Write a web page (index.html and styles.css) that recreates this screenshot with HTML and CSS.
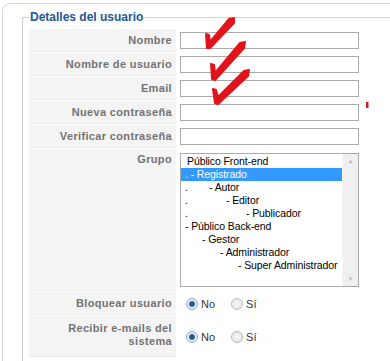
FILE: index.html
```html
<!DOCTYPE html>
<html lang="es">
<head>
    <meta charset="UTF-8">
    <title>Detalles del usuario</title>
    <link rel="stylesheet" href="styles.css">
</head>
<body>
<div class="page">
    <div class="panel">
        <fieldset class="details">
            <legend>Detalles del usuario</legend>
            <div class="form-grid">
                <label class="key" for="name">Nombre</label>
                <div class="val"><input type="text" id="name"></div>

                <label class="key" for="username">Nombre de usuario</label>
                <div class="val"><input type="text" id="username"></div>

                <label class="key" for="email">Email</label>
                <div class="val"><input type="text" id="email"></div>

                <label class="key" for="password">Nueva contraseña</label>
                <div class="val"><input type="password" id="password"></div>

                <label class="key" for="password2">Verificar contraseña</label>
                <div class="val"><input type="password" id="password2"></div>

                <label class="key key-top">Grupo</label>
                <div class="val">
                    <div class="listbox">
                        <ul class="options">
                            <li class="opt first">Público Front-end</li>
                            <li class="opt selected">. - Registrado</li>
                            <li class="opt"><span class="dot dot-24">.</span>- Autor</li>
                            <li class="opt"><span class="dot dot-41">.</span>- Editor</li>
                            <li class="opt"><span class="dot dot-61">.</span>- Publicador</li>
                            <li class="opt">- Público Back-end</li>
                            <li class="opt lvl-1">- Gestor</li>
                            <li class="opt lvl-2">- Administrador</li>
                            <li class="opt lvl-3">- Super Administrador</li>
                        </ul>
                        <div class="scrollbar">
                            <span class="arrow">&#9650;</span>
                            <span class="arrow">&#9660;</span>
                        </div>
                    </div>
                </div>

                <div class="key">Bloquear usuario</div>
                <div class="val radios">
                    <input type="radio" name="block" id="block0" checked><label for="block0">No</label>
                    <input type="radio" name="block" id="block1"><label for="block1">Sí</label>
                </div>

                <div class="key key-tall">Recibir e-mails del sistema</div>
                <div class="val radios">
                    <input type="radio" name="mail" id="mail0" checked><label for="mail0">No</label>
                    <input type="radio" name="mail" id="mail1"><label for="mail1">Sí</label>
                </div>
            </div>
        </fieldset>
    </div>

    <!-- hand drawn marks on top of the screenshot -->
    <svg class="marks" width="390" height="361" viewBox="0 0 390 361">
        <g fill="#e3131b" stroke="#e3131b" stroke-width="2" stroke-linejoin="round">
            <path d="M206 34 L209 35 L210 42 L229 19 L234 18 L234 23 L210 48 L207 48 Z"/>
            <path d="M211 64 L214 65 L215 73 L240 43 L245 42 L244 48 L215 80 L212 79 Z"/>
            <path d="M213 89 L216 90 L218 97 L244 71 L249 70 L248 76 L218 104 L215 103 Z"/>
        </g>
        <rect x="366" y="102" width="2.5" height="6" fill="#d8141c"/>
    </svg>
</div>
</body>
</html>
```

FILE: styles.css
```css
body {
    margin: 0;
    font-family: "Liberation Sans", Arial, sans-serif;
    background: #fff;
    overflow: hidden;
}

.page {
    position: relative;
    width: 390px;
    height: 361px;
    overflow: hidden;
}

.panel {
    margin: 3px 0 0 2px;
    width: 430px;
    height: 380px;
    border: 1px solid #d6d6d6;
    border-radius: 8px;
    padding: 6px 0 0 19px;
    box-sizing: border-box;
}

.details {
    margin: 0;
    border: 1px solid #cfcfcf;
    padding: 5px 6px 9px 6px;
}

.details legend {
    padding: 0 1px;
    color: #1d5796;
    font-size: 12px;
    font-weight: bold;
    line-height: 14px;
}

.form-grid {
    display: grid;
    grid-template-columns: 147px 1fr;
    row-gap: 1px;
}

.key {
    background: #f4f4f4;
    border-bottom: 1px solid #e9e9e9;
    color: #737373;
    font-size: 11px;
    font-weight: bold;
    letter-spacing: 0.35px;
    text-align: right;
    padding: 0 4px;
    min-height: 22px;
    display: flex;
    align-items: center;
    justify-content: flex-end;
    line-height: 13px;
}

.key-top {
    align-items: flex-start;
    padding-top: 4px;
}

.key-tall {
    padding-top: 6px;
    padding-bottom: 8px;
}

.val {
    padding-left: 4px;
    display: flex;
    align-items: center;
}

.val input[type="text"],
.val input[type="password"] {
    width: 179px;
    height: 17px;
    box-sizing: border-box;
    border: 1px solid #ababab;
    margin: 0;
    padding: 0 2px;
    outline: none;
}

.listbox {
    display: flex;
    width: 179px;
    height: 134px;
    box-sizing: border-box;
    border: 1px solid #ababab;
    margin: 4px 0;
    font-size: 10.5px;
    letter-spacing: -0.1px;
    color: #000;
}

.options {
    list-style: none;
    margin: 0;
    padding: 1px 0 0 0;
    flex: 1;
}

.opt {
    height: 13px;
    line-height: 13px;
    padding-left: 4px;
    white-space: nowrap;
}

.opt.first {
    padding-left: 6px;
}

.opt.selected {
    background: #3399ff;
    color: #fff;
}

.dot {
    display: inline-block;
}

.dot-24 { width: 24px; }
.dot-41 { width: 41px; }
.dot-61 { width: 61px; }

.lvl-1 { padding-left: 21px; }
.lvl-2 { padding-left: 39px; }
.lvl-3 { padding-left: 57px; }

.scrollbar {
    width: 15px;
    background: #f0f0f0;
    border-left: 1px solid #f7f7f7;
    display: flex;
    flex-direction: column;
    justify-content: space-between;
    align-items: center;
    padding: 3px 0;
}

.arrow {
    font-size: 6px;
    color: #b8b8b8;
    line-height: 8px;
}

.radios {
    font-size: 11px;
    color: #333;
}

.radios input[type="radio"] {
    appearance: none;
    width: 12px;
    height: 12px;
    margin: 0 3px 0 6px;
    border: 1px solid #b9b9b9;
    border-radius: 50%;
    background: radial-gradient(circle, #f8f8f8 0, #e2e2e2 100%);
    box-sizing: border-box;
}

.radios input[type="radio"]:checked {
    border-color: #9aa6b2;
    background: radial-gradient(circle, #1c4a78 0, #2d6aa0 2.5px, #e9eef3 3.5px, #dfe4ea 100%);
}

.radios label {
    margin-right: 10px;
}

.marks {
    position: absolute;
    left: 0;
    top: 0;
    pointer-events: none;
}
```
